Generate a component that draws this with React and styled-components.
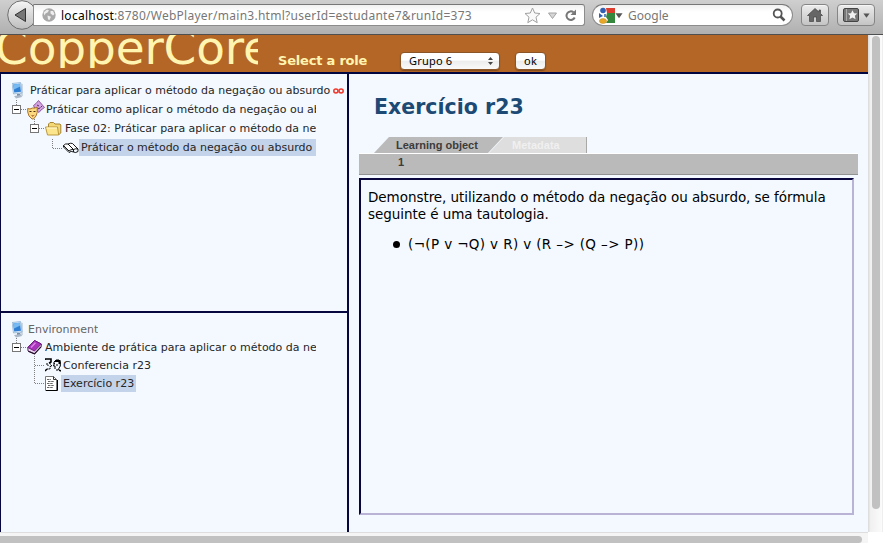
import React from 'react';
import styled, { createGlobalStyle } from 'styled-components';

const Global = createGlobalStyle`
  * { box-sizing: border-box; }
  html, body { margin: 0; height: 100%; overflow: hidden; }
  body { font-family: "DejaVu Sans", Verdana, sans-serif; font-size: 11px; color: #222; background: #fff; }
  svg { display: block; flex: none; }
  h1, p, ul { margin: 0; padding: 0; }
`;

const Window = styled.div`
  width: 883px;
  height: 543px;
  display: grid;
  grid-template-rows: 35px 497px 11px;
  overflow: hidden;
`;

/* Browser toolbar */
const Toolbar = styled.header`
  display: flex;
  align-items: flex-start;
  padding: 0 8px 0 7px;
  background: linear-gradient(#cfcfcf, #b0b0b0);
  border-bottom: 1px solid #4f4f4f;
  font-family: "Noto Sans", "Open Sans", sans-serif;
  font-size: 12px;
  color: #777;
`;
const AddressBar = styled.div`
  width: 552px;
  height: 22px;
  margin: 4px 0 0 -5px;
  padding: 0 7px 0 8px;
  display: flex;
  align-items: center;
  background: linear-gradient(#f1f1f1, #fff 35%);
  border: 1px solid #8c8c8c;
  border-top-color: #777;
  border-radius: 0 3px 3px 0;
`;
const Url = styled.div`
  display: flex;
  margin-left: 5px;
  flex: 1;
  white-space: nowrap;
  letter-spacing: 0.26px;
`;
const Host = styled.span`
  color: #000;
`;
const AddressActions = styled.div`
  display: flex;
  align-items: center;
  gap: 7px;
`;
const SearchBox = styled.div`
  width: 201px;
  height: 22px;
  margin: 4px 0 0 7px;
  padding: 0 6px 0 5px;
  display: flex;
  align-items: center;
  background: linear-gradient(#f1f1f1, #fff 35%);
  border: 1px solid #8c8c8c;
  border-top-color: #777;
  border-radius: 11px;
`;
const SearchLabel = styled.span`
  flex: 1;
  padding-left: 5px;
`;
const ToolButton = styled.button`
  width: ${(p) => p.$w}px;
  height: 22px;
  margin: 4px 0 0 8px;
  padding: 0;
  display: flex;
  align-items: center;
  justify-content: center;
  gap: 4px;
  background: linear-gradient(#ececec, #c4c4c4);
  border: 1px solid #858585;
  border-radius: 4px;
  box-shadow: inset 0 1px #fff8;
`;

/* Page viewport */
const Viewport = styled.div`
  display: grid;
  grid-template-columns: 868px 15px;
`;
const Page = styled.div`
  display: grid;
  grid-template-rows: 37px 460px;
  min-height: 0;
`;
const Banner = styled.div`
  display: flex;
  align-items: flex-start;
  background: #b36625;
  color: #fff5b0;
`;
const Brand = styled.div`
  width: 258px;
  height: 33px;
  overflow: hidden;
  font-size: 47px;
  line-height: 55px;
  white-space: nowrap;
  span { display: block; margin: -15.5px 0 0 -5px; letter-spacing: -0.15px; }
`;
const RoleForm = styled.div`
  display: flex;
  align-items: center;
  height: 18px;
  margin: 17px 0 0 20px;
`;
const RoleLabel = styled.label`
  width: 122px;
  padding-bottom: 2px;
  font-weight: 700;
  font-size: 13px;
  letter-spacing: -0.2px;
  white-space: nowrap;
`;
const FormControl = styled.div`
  width: ${(p) => p.$w}px;
  height: 18px;
  margin-right: 15px;
  padding: 0 ${(p) => (p.$menu ? '6px 1px 8px' : '0 1px')};
  display: flex;
  align-items: center;
  justify-content: ${(p) => (p.$menu ? 'space-between' : 'center')};
  font: 11px "Noto Sans", sans-serif;
  letter-spacing: 0.2px;
  color: #000;
  background: linear-gradient(#fff 45%, #ececec 50%, #fafafa);
  border: 1px solid #8b5527;
  border-radius: 4px;
  box-shadow: 0 1px 1px #0004;
`;
const Frames = styled.div`
  display: grid;
  grid-template-columns: 349px 1fr;
  background: #f3f9fe;
  border-top: 2px solid #00063f;
`;
const Sidebar = styled.nav`
  display: grid;
  grid-template-rows: 239px 1fr;
  border-left: 1px solid #06073f;
  border-right: 2px solid #06073f;
  min-width: 0;
`;
const TreePane = styled.section`
  padding-top: ${(p) => p.$top}px;
  border-bottom: ${(p) => (p.$divided ? '2px solid #06073f' : 'none')};
`;
const TreeRow = styled.div`
  display: flex;
  align-items: center;
  height: ${(p) => p.$h}px;
  padding-left: ${(p) => p.$indent}px;
`;
const TreeLabel = styled.span`
  width: ${(p) => (p.$w ? `${p.$w}px` : 'auto')};
  height: 17px;
  line-height: 17px;
  margin-left: ${(p) => p.$gap || 0}px;
  padding: 0 ${(p) => (p.$selected ? 2 : 0)}px;
  overflow: hidden;
  white-space: nowrap;
  color: ${(p) => (p.$muted ? '#666' : '#262626')};
  background: ${(p) => (p.$selected ? '#c3d3ea' : 'transparent')};
`;

/* Content frame */
const Content = styled.main`
  padding: 21px 10px 0 10px;
`;
const Title = styled.h1`
  height: 42px;
  padding-left: 15px;
  font-size: 20.5px;
  line-height: 24px;
  font-weight: 700;
  letter-spacing: 0.03px;
  color: #1c4a75;
`;
const Tabs = styled.div`
  display: flex;
  height: 16px;
  padding-left: 15px;
  font: bold 11px/16px "Liberation Sans", Arial, sans-serif;
`;
const Tab = styled.div`
  width: ${(p) => p.$w}px;
  padding-left: ${(p) => (p.$active ? 22 : 23)}px;
  margin-right: -14px;
  color: ${(p) => (p.$active ? '#3c3c3c' : '#f0f0f0')};
  background: ${(p) => (p.$active ? '#bababa' : '#dedede')};
  border-right: ${(p) => (p.$active ? 'none' : '1px solid #a8a8a8')};
  clip-path: ${(p) =>
    p.$active
      ? 'polygon(15px 0, 100% 0, calc(100% - 15px) 100%, 0 100%)'
      : 'polygon(15px 0, 100% 0, 100% 100%, 0 100%)'};
`;
const SubTabs = styled.div`
  height: 22px;
  width: 499px;
  padding-left: 39px;
  background: #bababa;
  border-top: 1px solid #fff;
  border-bottom: 1px solid #929292;
  font: bold 11px/17px "Liberation Sans", Arial, sans-serif;
  color: #3c3c3c;
`;
const Exercise = styled.article`
  width: 495px;
  height: 337px;
  margin-top: 3px;
  padding: 9px 7px;
  border: 2px solid;
  border-color: #09073d #b9b3d5 #b9b3d5 #09073d;
  font-size: 13.5px;
  line-height: 17px;
  color: #000;
  white-space: nowrap;
`;
const Paragraph = styled.p`
  letter-spacing: -0.05px;
`;
const Formulas = styled.ul`
  display: flex;
  flex-direction: column;
  margin-top: 13px;
  list-style: none;
`;
const Formula = styled.li`
  display: flex;
  align-items: center;
  gap: 8px;
  padding-left: 25px;
  letter-spacing: 0.37px;
  &::before { content: ''; width: 7px; height: 7px; border-radius: 50%; background: #000; }
`;

const VTrack = styled.div`
  padding: 1px 3px 0 4px;
  background: linear-gradient(90deg, #dedede 1px, #f0f0f0 2px, #fbfbfb 14px, #eee 14px);
`;
const VThumb = styled.div`
  height: 473px;
  width: 8px;
  border-radius: 4px;
  background: #c1c1c1;
`;
const HTrack = styled.div`
  width: 868px;
  padding-top: 4px;
  border-top: 1px solid #dedede;
  background: #f5f5f5;
`;
const HThumb = styled.div`
  width: 862px;
  height: 7px;
  margin-top: -1px;
  border-radius: 0 4px 4px 0;
  background: #c1c1c1;
`;

const BackIcon = () => (
  <svg width="31" height="31" viewBox="0 0 31 31">
    <defs>
      <linearGradient id="back" x2="0" y2="1"><stop stopColor="#f6f6f6" /><stop offset="1" stopColor="#bdbdbd" /></linearGradient>
    </defs>
    <circle cx="15" cy="15" r="14.3" fill="url(#back)" stroke="#6e6e6e" />
    <path d="M8 15 18.5 8.5v13z" fill="#777" stroke="#333" strokeWidth="1" />
  </svg>
);
const GlobeIcon = () => (
  <svg width="14" height="14" viewBox="0 0 14 14">
    <circle cx="7" cy="7" r="6.7" fill="#a9a9a9" />
    <path d="M1.500 4.500 5 1.500l2 1-1.500 2-2 1-1 2zM8.500 3l2.500 0 1.500 3-1.500 1.500-2.500-2zM5.500 7.500l3.500 1.200-1.500 3.300-1.500-.5z" fill="#eee" />
  </svg>
);
const StarIcon = () => (
  <svg width="17" height="17" viewBox="0 0 17 17">
    <path d="m8.500 1 2.200 5 5.300.5-4 3.700 1.200 5.500-4.700-2.900-4.700 2.900L5 10.200 1 6.500 6.300 6z" fill="#fafafa" stroke="#a0a0a0" />
  </svg>
);
const CaretIcon = ({ outline, w = 7 }) => (
  <svg width={w} height="7" viewBox="0 0 9 7">
    <path d="M0.500 1h8L4.500 6.500z" fill={outline ? '#d6d6d6' : '#555'} stroke={outline ? '#a3a3a3' : 'none'} />
  </svg>
);
const ReloadIcon = () => (
  <svg width="13" height="13" viewBox="0 0 13 13">
    <path d="M9.500 3.300A4.300 4.300 0 1 0 10.700 8.500" fill="none" stroke="#777" strokeWidth="2" />
    <path d="M12 .5v5.500H6.500z" fill="#777" />
  </svg>
);
const EngineIcon = () => (
  <svg width="17" height="17" viewBox="0 0 17 17">
    <path d="M8 1h9v5H9z" fill="#dd3d2c" />
    <path d="M9 6h8v10H8l2-3-2-3z" fill="#35873d" />
    <circle cx="5" cy="3.500" r="2.800" fill="#2f60b3" />
    <path d="m1 6 4 3-4 2z" fill="#2f60b3" />
    <ellipse cx="5" cy="14" rx="3.600" ry="2.500" fill="#e5a829" stroke="#c98d1c" strokeWidth=".5" />
    <path d="M7 7v3" stroke="#2f60b3" strokeWidth="1.500" />
  </svg>
);
const MagnifierIcon = () => (
  <svg width="14" height="14" viewBox="0 0 14 14" fill="none" stroke="#555">
    <circle cx="5.700" cy="5.500" r="4" strokeWidth="1.800" />
    <path d="m8.500 8.500 4 4" strokeWidth="2.500" />
  </svg>
);
const HomeIcon = () => (
  <svg width="16" height="14" viewBox="0 0 16 14">
    <path d="M8 .5 12 4V2h1.500v3.500L15.500 7.500h-2V13.500H9.500V9h-3v4.500h-4v-6h-2z" fill="#666" stroke="#444" strokeWidth=".7" />
  </svg>
);
const BookmarkIcon = () => (
  <svg width="16" height="14" viewBox="0 0 16 14">
    <rect x=".5" y=".5" width="15" height="13" rx="1.500" fill="#777" stroke="#444" />
    <path d="M3.500 1v12" stroke="#aaa" />
    <path d="m9.500 2.300 1.500 3 3.300.3-2.500 2.200.8 3.400-3.100-1.800-3.100 1.800.8-3.400-2.500-2.200 3.300-.3z" fill="#f2f2f2" />
  </svg>
);
const StepperIcon = () => (
  <svg width="5" height="8" viewBox="0 0 5 8">
    <path d="M0 3 2.500 0 5 3zM0 5l2.500 3L5 5z" fill="#444" />
  </svg>
);

const ComputerIcon = () => (
  <svg width="12" height="17" viewBox="0 0 12 17">
    <path d="M8 1l3 1v12l-3 1z" fill="#cbd8e4" />
    <path d="M0 1.500 8.500.5 10 11 1.500 12z" fill="#d3e6f5" stroke="#7ba3cc" strokeWidth=".6" />
    <path d="M1.200 2.500 7.800 1.700 9 9.700 2.200 10.500z" fill="#2f80d4" />
    <path d="M1.200 2.500 7.800 1.700 8.200 4.500 2 7.500z" fill="#77bbf2" />
    <path d="M5 12h3v2H5z" fill="#7d8ea5" />
    <path d="M2 14l7-1 1 2-6 1.500z" fill="#aab8c7" />
  </svg>
);
/* Expand box with the dotted stubs that tie it to its parent and icon */
const ToggleBox = styled.svg`
  align-self: flex-start;
`;
const Toggle = () => (
  <ToggleBox width="15" height="18" viewBox="0 0 15 18">
    <path d="M4.500 0v5M9 9.500h6" stroke="#808080" strokeDasharray="1 1" />
    <rect x=".5" y="5.500" width="8" height="8" fill="#fff" stroke="#777" />
    <path d="M2 9.500h5" stroke="#000" />
  </ToggleBox>
);
const Branch = ({ through }) => (
  <svg width="11" height="18" viewBox="0 0 11 18">
    <path d={`M.5 0v${through ? 18 : 10}M1 9.500h10`} stroke="#808080" strokeDasharray="1 1" fill="none" />
  </svg>
);
const MasksIcon = () => (
  <svg width="18" height="20" viewBox="0 0 18 20">
    <path d="M6.500 5.500 9 3.500l2.500-3L14.500 4l3 3.500-3.500 2.500-2 2.500L8 9z" fill="#d3a3e0" stroke="#864e99" strokeWidth=".9" />
    <path d="m10 5 2 1M13.500 7.500l1.500-1.500M10.500 9l2.500-1" stroke="#583268" />
    <path d="M.7 8.500 3 9l2.500-1L8 8l2.200-1v5.500L9 16l-2.500 3H5L2 16l-1.300-4z" fill="#fad97f" stroke="#a4671b" strokeWidth=".9" />
    <path d="M2.500 11.500h2M6.500 11.500h2" stroke="#4b2c10" strokeWidth="1.100" />
    <path d="M3.500 14.500q2 1.800 4.500 0l-2.300 2.300z" fill="#8c2d17" />
  </svg>
);
const FolderIcon = () => (
  <svg width="17" height="15" viewBox="0 0 17 15">
    <path d="M3.500 6V3L5 1.500h3.500L10 3h5l.8 1v8l-1.800 1.500z" fill="#f3d878" stroke="#9d7b25" strokeWidth=".9" />
    <path d="M.5 6h12l1.200 8H2.500z" fill="#fbe58d" stroke="#b58f30" strokeWidth=".9" />
    <path d="M1.500 7h10.500" stroke="#fffbd4" />
  </svg>
);
const OpenBookIcon = () => (
  <svg width="16" height="12" viewBox="0 0 16 12" fill="#fff" stroke="#000" strokeWidth=".9">
    <path d="M.5 3.500Q2.500 1.200 5 2l5.500 5.500Q8 7 6 9z" />
    <path d="M5 2Q7.500.8 9.500 1.500L15 7Q12.500 6.300 10.500 7.500z" />
    <path d="M.5 3.500v1.500L6 10.500q2-2 4.500-.5 2 1.300 4.500-.5V7M10.500 7.500V10" fill="none" />
  </svg>
);
const PurpleBookIcon = () => (
  <svg width="15" height="16" viewBox="0 0 15 16">
    <path d="M.8 8.500 7.500 1.500 14.300 5v2.500L7.500 15 1 12z" fill="#e7d3ed" stroke="#471a56" strokeWidth=".9" />
    <path d="M.8 8.500 7.500 1.500 14.300 5 7.500 12z" fill="#a933bd" stroke="#611574" strokeWidth=".8" />
    <path d="m4 8.500 4.500-4.700" stroke="#d986e3" strokeWidth="1.500" />
    <path d="m1.300 12.200 6.200 2.700 6.500-7" fill="none" stroke="#26122d" strokeWidth="1.200" />
  </svg>
);
const FacesIcon = () => (
  <svg width="16" height="14" viewBox="0 0 16 14" fill="none" stroke="#000">
    <path d="M0 2V1h6v3L4 5" strokeWidth="1.600" />
    <path d="M5 4v2l2 2-2 .5V11H2M1 6h2v2" strokeDasharray="2 .7" />
    <path d="M9 6V4l2-2h3l1.300 2v4L13 12h-2" />
    <path d="M10 3h4.500v3" strokeWidth="2" />
    <path d="M9.500 5 8.500 8H10v3M12 6v2" />
    <path d="m0 13 2-2M14 12l2 1" strokeWidth="1.500" />
  </svg>
);
const DocumentIcon = () => (
  <svg width="13" height="15" viewBox="0 0 13 15">
    <path d="M.5.500h8l3 3v11H.5z" fill="#fff" stroke="#777" />
    <path d="M12.500 4v10.500H1" fill="none" stroke="#000" />
    <path d="M8.500.500v3h3" fill="none" stroke="#333" />
    <path d="M2 3.500h4M3 5.500h6M2 7.500h6M3 9.500h6M2 11.500h6" stroke="#666" strokeDasharray="2.500 .7" />
  </svg>
);
const InfinityIcon = () => (
  <svg width="11" height="6" viewBox="0 0 11 6" fill="none" stroke="#f0392d" strokeWidth="1.500">
    <ellipse cx="2.900" cy="3" rx="2.100" ry="1.900" />
    <ellipse cx="8.100" cy="3" rx="2.100" ry="1.900" />
  </svg>
);

export default function App() {
  return (
    <Window>
      <Global />
      <Toolbar>
        <BackIcon />
        <AddressBar>
          <GlobeIcon />
          <Url>
            <Host>localhost</Host>
            <span>:8780/WebPlayer/main3.html?userId=estudante7&amp;runId=373</span>
          </Url>
          <AddressActions>
            <StarIcon />
            <CaretIcon outline w={9} />
            <ReloadIcon />
          </AddressActions>
        </AddressBar>
        <SearchBox>
          <EngineIcon />
          <CaretIcon w={8} />
          <SearchLabel>Google</SearchLabel>
          <MagnifierIcon />
        </SearchBox>
        <ToolButton $w={28}><HomeIcon /></ToolButton>
        <ToolButton $w={38}><BookmarkIcon /><CaretIcon /></ToolButton>
      </Toolbar>
      <Viewport>
        <Page>
          <Banner>
            <Brand><span>CopperCore</span></Brand>
            <RoleForm>
              <RoleLabel>Select a role</RoleLabel>
              <FormControl $w={100} $menu>Grupo 6<StepperIcon /></FormControl>
              <FormControl $w={31}>ok</FormControl>
            </RoleForm>
          </Banner>
          <Frames>
            <Sidebar>
              <TreePane $top={7} $divided>
                <TreeRow $h={19} $indent={11}>
                  <ComputerIcon />
                  <TreeLabel $w={303} $gap={6}>Práticar para aplicar o método da negação ou absurdo</TreeLabel>
                  <InfinityIcon />
                </TreeRow>
                <TreeRow $h={19} $indent={11}>
                  <Toggle /><MasksIcon />
                  <TreeLabel $w={270} $gap={1}>Práticar como aplicar o método da negação ou absurdo</TreeLabel>
                </TreeRow>
                <TreeRow $h={19} $indent={29}>
                  <Toggle /><FolderIcon />
                  <TreeLabel $w={251} $gap={3}>Fase 02: Práticar para aplicar o método da negação ou absurdo</TreeLabel>
                </TreeRow>
                <TreeRow $h={19} $indent={51}>
                  <Branch /><OpenBookIcon />
                  <TreeLabel $w={237} $selected>Práticar o método da negação ou absurdo</TreeLabel>
                </TreeRow>
              </TreePane>
              <TreePane $top={7}>
                <TreeRow $h={18} $indent={11}>
                  <ComputerIcon />
                  <TreeLabel $gap={4} $muted>Environment</TreeLabel>
                </TreeRow>
                <TreeRow $h={18} $indent={11}>
                  <Toggle /><PurpleBookIcon />
                  <TreeLabel $w={271} $gap={3}>Ambiente de prática para aplicar o método da negação ou absurdo</TreeLabel>
                </TreeRow>
                <TreeRow $h={18} $indent={33}>
                  <Branch through /><FacesIcon />
                  <TreeLabel $gap={2}>Conferencia r23</TreeLabel>
                </TreeRow>
                <TreeRow $h={18} $indent={33}>
                  <Branch /><DocumentIcon />
                  <TreeLabel $w={75} $gap={3} $selected>Exercício r23</TreeLabel>
                </TreeRow>
              </TreePane>
            </Sidebar>
            <Content>
              <Title>Exercício r23</Title>
              <Tabs>
                <Tab $w={129} $active>Learning object</Tab>
                <Tab $w={98}>Metadata</Tab>
              </Tabs>
              <SubTabs>1</SubTabs>
              <Exercise>
                <Paragraph>Demonstre, utilizando o método da negação ou absurdo, se fórmula</Paragraph>
                <Paragraph>seguinte é uma tautologia.</Paragraph>
                <Formulas>
                  <Formula>(¬(P v ¬Q) v R) v (R –&gt; (Q –&gt; P))</Formula>
                </Formulas>
              </Exercise>
            </Content>
          </Frames>
        </Page>
        <VTrack><VThumb /></VTrack>
      </Viewport>
      <HTrack><HThumb /></HTrack>
    </Window>
  );
}
